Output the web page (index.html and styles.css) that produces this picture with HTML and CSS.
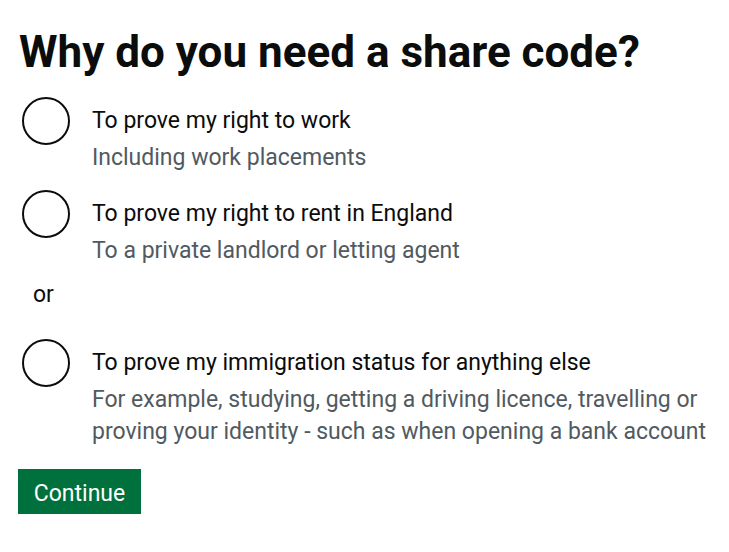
FILE: index.html
```html
<!DOCTYPE html>
<html lang="en">
<head>
<meta charset="utf-8">
<title>Why do you need a share code?</title>
<link rel="stylesheet" href="styles.css">
</head>
<body>
<main class="page">
  <form class="form">
    <fieldset class="fieldset">
      <legend class="heading">Why do you need a share code?</legend>
      <div class="radios">
        <label class="radio">
          <input class="radio-input" type="radio" name="reason" value="work">
          <span class="radio-circle"></span>
          <span class="radio-text">
            <span class="radio-label">To prove my right to work</span>
            <span class="radio-hint">Including work placements</span>
          </span>
        </label>
        <label class="radio">
          <input class="radio-input" type="radio" name="reason" value="rent">
          <span class="radio-circle"></span>
          <span class="radio-text">
            <span class="radio-label">To prove my right to rent in England</span>
            <span class="radio-hint">To a private landlord or letting agent</span>
          </span>
        </label>
        <div class="divider">or</div>
        <label class="radio">
          <input class="radio-input" type="radio" name="reason" value="other">
          <span class="radio-circle"></span>
          <span class="radio-text">
            <span class="radio-label">To prove my immigration status for anything else</span>
            <span class="radio-hint">For example, studying, getting a driving licence, travelling or proving your identity - such as when opening a bank account</span>
          </span>
        </label>
      </div>
    </fieldset>
    <button class="button" type="button">Continue</button>
  </form>
</main>
</body>
</html>
```
FILE: styles.css
```css
html, body {
  margin: 0;
  padding: 0;
  background: #ffffff;
}
body {
  font-family: Roboto, "Liberation Sans", Arial, sans-serif;
  color: #0b0c0c;
}
.page {
  padding: 27px 0 0 18px;
}
.form {
  display: flex;
  flex-direction: column;
  align-items: flex-start;
}
.fieldset {
  border: 0;
  margin: 0;
  padding: 0;
  min-width: 0;
}
.heading {
  padding: 0;
  font-size: 44px;
  font-weight: 700;
  line-height: 50px;
  margin: 0 0 20px 1px;
}
.radios {
  display: flex;
  flex-direction: column;
  width: 700px;
}
.radio {
  display: flex;
  align-items: flex-start;
  gap: 22px;
  cursor: pointer;
}
.radio + .radio {
  margin-top: 16px;
}
.radio-input {
  position: absolute;
  opacity: 0;
  width: 0;
  height: 0;
  margin: 0;
}
.radio-circle {
  flex: none;
  width: 44px;
  height: 44px;
  border: 2px solid #0b0c0c;
  border-radius: 50%;
  margin-left: 4px;
}
.radio-text {
  display: flex;
  flex-direction: column;
  padding-top: 8px;
}
.radio-label {
  font-size: 23px;
  line-height: 32px;
  color: #0b0c0c;
}
.radio-hint {
  font-size: 23px;
  line-height: 32px;
  color: #505a5f;
  margin-top: 5px;
}
.divider {
  font-size: 23px;
  line-height: 32px;
  margin: 12px 0 28px 15px;
}
.button {
  margin-top: 21px;
  font-family: inherit;
  font-size: 23px;
  line-height: 1;
  color: #ffffff;
  background: #00703c;
  border: 0;
  border-radius: 0;
  padding: 3px 0 0;
  box-shadow: 0 3px 0 #002d18;
  width: 123px;
  height: 45px;
  cursor: pointer;
}
```
